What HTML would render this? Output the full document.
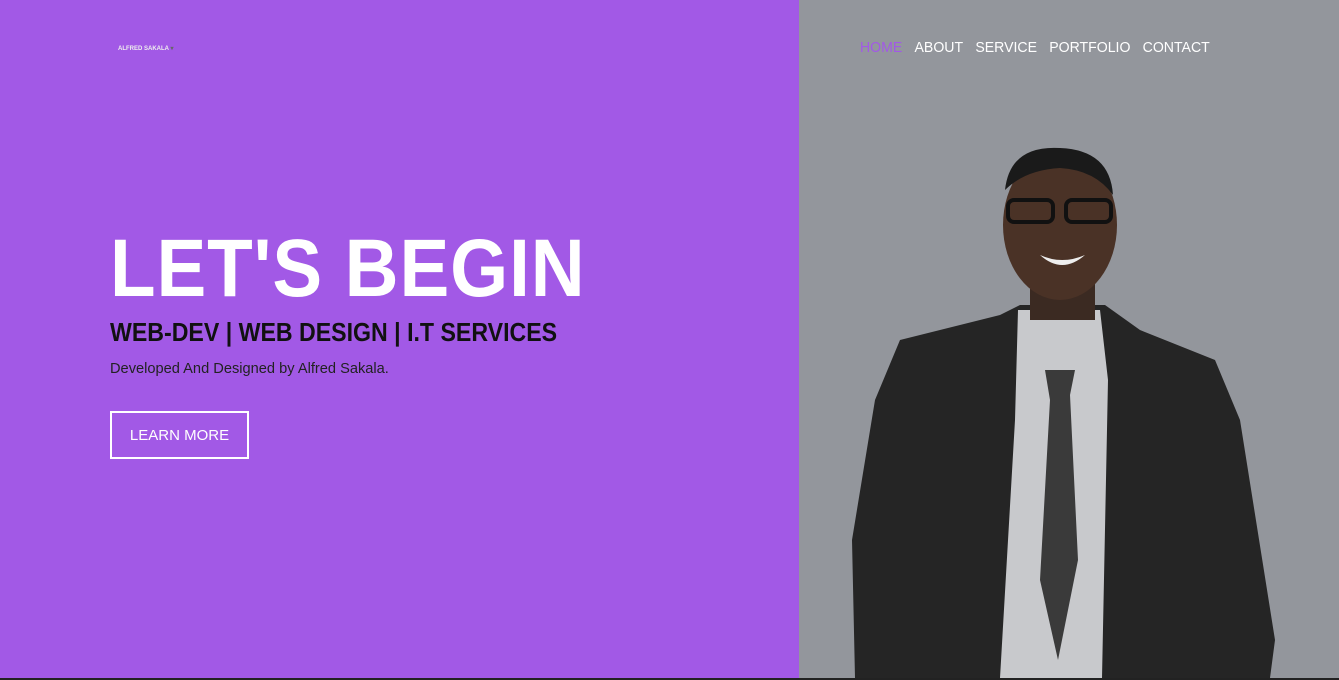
<!DOCTYPE html>
<html><head><style>
body{margin:0;width:1339px;height:680px;overflow:hidden;font-family:"Liberation Sans",sans-serif;}
.l{position:absolute;left:0;top:0;width:799px;height:678px;background:#a259e6;}
.r{position:absolute;left:799px;top:0;width:540px;height:678px;background:#93969c;}
.bl{position:absolute;left:0;top:678px;width:1339px;height:2px;background:#222;}
.logo{position:absolute;left:118px;top:45px;font-size:6px;font-weight:bold;color:#eee;}
nav{position:absolute;top:39px;left:860px;font-size:15px;color:#fff;transform:scaleX(0.94);transform-origin:left top;white-space:nowrap;}
nav span{margin-right:13px}
h1{position:absolute;left:110px;top:222px;margin:0;font-size:82px;font-weight:bold;color:#fff;letter-spacing:1px;transform:scaleX(0.91);transform-origin:left top;white-space:nowrap;}
h2{position:absolute;left:110px;top:317px;margin:0;font-size:26px;font-weight:bold;color:#111;transform:scaleX(0.89);transform-origin:left top;white-space:nowrap;}
p{position:absolute;left:110px;top:360px;margin:0;font-size:15px;color:#222;transform:scaleX(0.975);transform-origin:left top;white-space:nowrap;}
.btn{position:absolute;left:110px;top:411px;width:135px;height:44px;border:2px solid #fff;color:#fff;font-size:15px;text-align:center;line-height:46px;}
</style></head><body>
<div class="l"></div><div class="r"></div><div class="bl"></div>
<div class="logo">ALFRED SAKALA <span style="color:#666">▾</span></div>
<nav><span style="color:#a259e6">HOME</span><span>ABOUT</span><span>SERVICE</span><span>PORTFOLIO</span><span>CONTACT</span></nav>
<h1>LET'S BEGIN</h1>
<h2>WEB-DEV | WEB DESIGN | I.T SERVICES</h2>
<p>Developed And Designed by Alfred Sakala.</p>
<div class="btn">LEARN MORE</div>
<svg style="position:absolute;left:0;top:0" width="1339" height="678">
<path d="M1020 305 L1105 305 L1140 330 L1215 360 L1240 420 L1275 640 L1270 678 L855 678 L852 540 L875 400 L900 340 L1000 315Z" fill="#252525"/>
<path d="M1018 310 L1100 310 L1108 380 L1102 678 L1000 678 L1015 420Z" fill="#c8c9cc"/>
<path d="M1045 370 L1075 370 L1070 395 L1078 560 L1058 660 L1040 580 L1050 400Z" fill="#3a3a3a"/>
<rect x="1030" y="255" width="65" height="65" fill="#3b2a22"/>
<ellipse cx="1060" cy="225" rx="57" ry="75" fill="#4a3226"/>
<path d="M1005 190 Q1010 145 1060 148 Q1110 150 1113 195 Q1095 170 1060 168 Q1025 170 1005 190Z" fill="#1a1a1a"/>
<rect x="1008" y="200" width="45" height="22" rx="6" fill="none" stroke="#111" stroke-width="4"/>
<rect x="1066" y="200" width="45" height="22" rx="6" fill="none" stroke="#111" stroke-width="4"/>
<path d="M1040 255 Q1062 265 1085 255 Q1062 275 1040 255Z" fill="#eee"/>
</svg>
</body></html>
